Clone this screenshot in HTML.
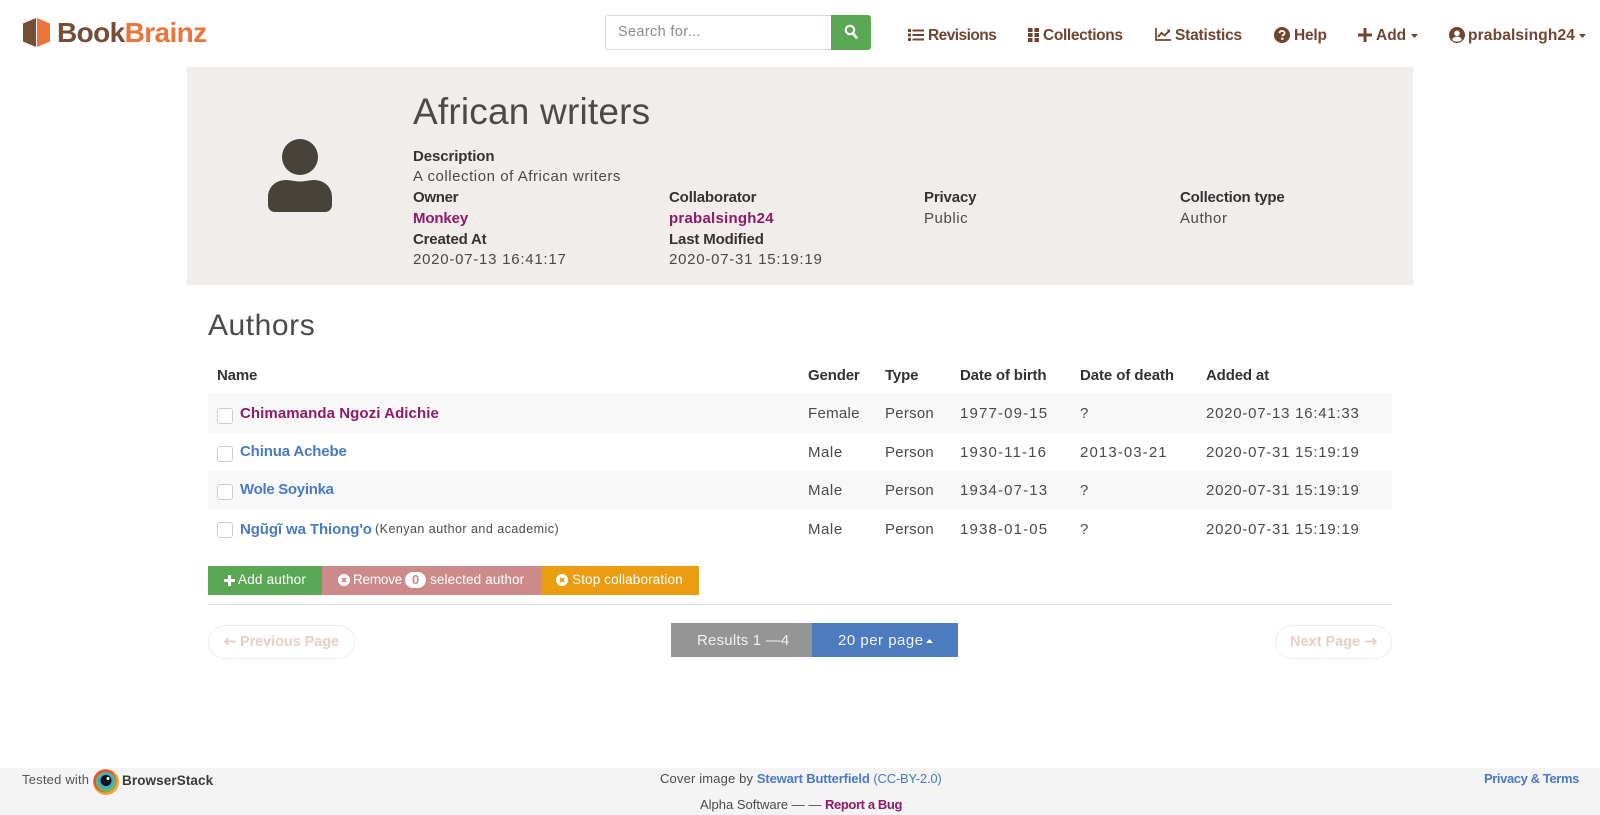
<!DOCTYPE html>
<html lang="en"><head><meta charset="utf-8"><title>BookBrainz – African writers</title>
<style>
html,body{margin:0;padding:0;background:#fff}
body{position:relative;width:1600px;height:815px;overflow:hidden;font-family:"Liberation Sans",sans-serif;font-size:15px;color:#4a4a4a}
.t{position:absolute;white-space:nowrap;line-height:20px;letter-spacing:.55px}
.b{font-weight:bold;color:#333;letter-spacing:-.15px}
.a{color:#8f1a6a;font-weight:bold}
.l{color:#4a7ac4;font-weight:bold}
.n{font-weight:bold;color:#6d4530;font-size:15.5px;letter-spacing:0}
.box{position:absolute}
svg{position:absolute;display:block}
.cb{position:absolute;left:217px;width:14px;height:14px;border:1px solid #ccc;border-radius:3px;background:#fff}
.d{letter-spacing:.75px}
.s{letter-spacing:1.15px}
.p{letter-spacing:.25px}
.w{color:#fff;font-size:13.5px}
</style></head><body>

<svg style="left:23px;top:18px" width="27" height="29" viewBox="0 0 27 29"><path d="M13 0 0 5.500v18L13 29z" fill="#754e37"/><path d="M14 0 27 5.500v18L14 29z" fill="#eb743b"/></svg>
<div class="t" style="left:57px;top:17px;font-size:28px;line-height:32px;font-weight:bold;color:#754e37;letter-spacing:-.6px">Book<span style="color:#eb743b">Brainz</span></div>

<div class="box" style="left:605px;top:15px;width:225px;height:33px;border:1px solid #e0d8d3;border-right:0;border-radius:3px 0 0 3px;background:#fff"></div>
<div class="t" style="left:618px;top:22px;color:#8c8c8c;font-size:14.5px;letter-spacing:.35px">Search for...</div>
<div class="box" style="left:831px;top:15px;width:40px;height:35px;background:#5aa854;border-radius:0 3px 3px 0"></div>
<svg style="left:844px;top:24px" width="14" height="15" viewBox="0 0 14 15"><circle cx="6" cy="6" r="4.200" fill="none" stroke="#fff" stroke-width="2.200"/><path d="M9 9.500l3.500 4" stroke="#fff" stroke-width="2.600" stroke-linecap="round"/></svg>

<svg style="left:908px;top:28px" width="16" height="14" viewBox="0 0 16 14" fill="#6d4530"><rect x="0" y="1" width="3" height="3"/><rect x="0" y="5.500" width="3" height="3"/><rect x="0" y="10" width="3" height="3"/><rect x="4.500" y="1.500" width="11.500" height="2"/><rect x="4.500" y="6" width="11.500" height="2"/><rect x="4.500" y="10.500" width="11.500" height="2"/></svg>
<div class="t n" style="left:928px;top:26px;letter-spacing:-.55px">Revisions</div>
<svg style="left:1028px;top:28px" width="11" height="14" viewBox="0 0 11 14" fill="#6d4530"><rect width="4.500" height="4" y="0"/><rect x="6.500" width="4.500" height="4" y="0"/><rect width="4.500" height="4" y="5"/><rect x="6.500" width="4.500" height="4" y="5"/><rect width="4.500" height="4" y="10"/><rect x="6.500" width="4.500" height="4" y="10"/></svg>
<div class="t n" style="left:1043px;top:26px;letter-spacing:-.35px">Collections</div>
<svg style="left:1155px;top:28px" width="16" height="13" viewBox="0 0 16 13" fill="none" stroke="#6d4530"><path d="M1 0v12h15" stroke-width="1.700"/><path d="M3 9l3.500-4 3 2.500L14 3" stroke-width="1.900"/><path d="M11.500 1.500H15V5z" fill="#6d4530" stroke="none"/></svg>
<div class="t n" style="left:1175px;top:26px;letter-spacing:-.2px">Statistics</div>
<svg style="left:1274px;top:27px" width="16" height="16" viewBox="0 0 16 16"><circle cx="8" cy="8" r="8" fill="#6d4530"/><path d="M5.400 6.200C5.600 4.600 6.700 4 8 4c1.500 0 2.600.9 2.600 2.100 0 1.800-2.300 1.800-2.300 3.200" fill="none" stroke="#fff" stroke-width="1.800"/><rect x="7.200" y="10.700" width="2.200" height="2.100" fill="#fff"/></svg>
<div class="t n" style="left:1294px;top:26px;letter-spacing:-.2px">Help</div>
<svg style="left:1358px;top:28px" width="14" height="14" viewBox="0 0 14 14" fill="#6d4530"><rect x="5.500" width="3" height="14"/><rect y="5.500" width="14" height="3"/></svg>
<div class="t n" style="left:1376px;top:26px">Add</div>
<svg style="left:1411px;top:34px" width="7" height="4" viewBox="0 0 7 4"><path d="M0 0h7L3.500 4z" fill="#6d4530"/></svg>
<svg style="left:1449px;top:27px" width="16" height="16" viewBox="0 0 16 16"><circle cx="8" cy="8" r="8" fill="#6d4530"/><circle cx="8" cy="6.300" r="2.800" fill="#fff"/><path d="M3.200 13c.4-2.300 2-3.400 4.800-3.400s4.400 1.100 4.800 3.400c-1.300 1.100-3 1.600-4.800 1.600s-3.500-.5-4.800-1.600z" fill="#fff"/></svg>
<div class="t n" style="left:1468px;top:26px;letter-spacing:.15px">prabalsingh24</div>
<svg style="left:1579px;top:34px" width="7" height="4" viewBox="0 0 7 4"><path d="M0 0h7L3.500 4z" fill="#6d4530"/></svg>

<div class="box" style="left:187px;top:67px;width:1226px;height:218px;background:#f1edea"></div>
<svg style="left:268px;top:139px" width="64" height="74" viewBox="0 0 64 74" fill="#47433a"><circle cx="32" cy="18" r="18"/><path d="M0 66V58C0 48 8 41 18 41c5 0 8 1.500 14 1.500S41 41 46 41c10 0 18 7 18 17v8c0 4-3 7-7 7H7c-4 0-7-3-7-7z"/></svg>
<div class="t" style="left:413px;top:90px;font-size:37px;line-height:44px;color:#4a4a4a;letter-spacing:.2px">African writers</div>

<div class="t b" style="left:413px;top:147px;letter-spacing:-.1px">Description</div>
<div class="t" style="left:413px;top:167px">A collection of African writers</div>
<div class="t b" style="left:413px;top:188px;letter-spacing:-.3px">Owner</div>
<div class="t a" style="left:413px;top:209px;letter-spacing:-.13px">Monkey</div>
<div class="t b" style="left:413px;top:230px;letter-spacing:-.18px">Created At</div>
<div class="t d" style="left:413px;top:250px">2020-07-13 16:41:17</div>
<div class="t b" style="left:669px;top:188px">Collaborator</div>
<div class="t a" style="left:669px;top:209px;letter-spacing:.24px">prabalsingh24</div>
<div class="t b" style="left:669px;top:230px">Last Modified</div>
<div class="t d" style="left:669px;top:250px">2020-07-31 15:19:19</div>
<div class="t b" style="left:924px;top:188px">Privacy</div>
<div class="t" style="left:924px;top:209px">Public</div>
<div class="t b" style="left:1180px;top:188px;letter-spacing:-.2px">Collection type</div>
<div class="t" style="left:1180px;top:209px">Author</div>

<div class="t" style="left:208px;top:306px;font-size:30px;line-height:40px;color:#4a4a4a">Authors</div>

<div class="t b" style="left:217px;top:366px">Name</div>
<div class="t b" style="left:808px;top:366px">Gender</div>
<div class="t b" style="left:885px;top:366px">Type</div>
<div class="t b" style="left:960px;top:366px">Date of birth</div>
<div class="t b" style="left:1080px;top:366px;letter-spacing:-.08px">Date of death</div>
<div class="t b" style="left:1206px;top:366px">Added at</div>

<div class="box" style="left:208px;top:393px;width:1184px;height:40px;background:#f8f8f8"></div>
<div class="box" style="left:208px;top:471px;width:1184px;height:38px;background:#f8f8f8"></div>

<div class="cb" style="top:408px"></div>
<div class="t a" style="left:240px;top:404px;letter-spacing:.08px">Chimamanda Ngozi Adichie</div>
<div class="t" style="left:808px;top:404px;letter-spacing:.3px">Female</div><div class="t p" style="left:885px;top:404px">Person</div><div class="t s" style="left:960px;top:404px">1977-09-15</div><div class="t" style="left:1080px;top:404px">?</div><div class="t d" style="left:1206px;top:404px">2020-07-13 16:41:33</div>

<div class="cb" style="top:446px"></div>
<div class="t l" style="left:240px;top:442px;letter-spacing:-.15px">Chinua Achebe</div>
<div class="t" style="left:808px;top:443px">Male</div><div class="t p" style="left:885px;top:443px">Person</div><div class="t s" style="left:960px;top:443px">1930-11-16</div><div class="t" style="left:1080px;top:443px;letter-spacing:1.1px">2013-03-21</div><div class="t d" style="left:1206px;top:443px">2020-07-31 15:19:19</div>

<div class="cb" style="top:484px"></div>
<div class="t l" style="left:240px;top:480px;letter-spacing:-.3px">Wole Soyinka</div>
<div class="t" style="left:808px;top:481px">Male</div><div class="t p" style="left:885px;top:481px">Person</div><div class="t s" style="left:960px;top:481px">1934-07-13</div><div class="t" style="left:1080px;top:481px">?</div><div class="t d" style="left:1206px;top:481px">2020-07-31 15:19:19</div>

<div class="cb" style="top:522px"></div>
<div class="t l" style="left:240px;top:520px;letter-spacing:-.1px">Ngũgĩ wa Thiong'o</div>
<div class="t" style="left:375px;top:519px;font-size:12.5px;letter-spacing:.47px">(Kenyan author and academic)</div>
<div class="t" style="left:808px;top:520px">Male</div><div class="t p" style="left:885px;top:520px">Person</div><div class="t s" style="left:960px;top:520px">1938-01-05</div><div class="t" style="left:1080px;top:520px">?</div><div class="t d" style="left:1206px;top:520px">2020-07-31 15:19:19</div>

<div class="box" style="left:208px;top:566px;width:114px;height:29px;background:#5aa854"></div>
<div class="box" style="left:322px;top:566px;width:219px;height:29px;background:#cc8a8a"></div>
<div class="box" style="left:541px;top:566px;width:158px;height:29px;background:#eb9d11"></div>
<svg style="left:224px;top:575px" width="11" height="11" viewBox="0 0 11 11" fill="#fff"><rect x="4" width="3" height="11"/><rect y="4" width="11" height="3"/></svg>
<div class="t w" style="left:238px;top:570px;letter-spacing:.2px">Add author</div>
<svg style="left:338px;top:574px" width="12" height="12" viewBox="0 0 12 12"><circle cx="6" cy="6" r="6" fill="#fff"/><path d="M4 4l4 4M8 4l-4 4" stroke="#cc8a8a" stroke-width="1.800"/></svg>
<div class="t w" style="left:353px;top:570px;letter-spacing:-.2px">Remove</div>
<div class="box" style="left:405px;top:572px;width:21px;height:16px;border-radius:8px;background:#fff"></div>
<div class="t" style="left:412px;top:570px;color:#cc8a8a;font-size:13px;font-weight:bold;letter-spacing:0">0</div>
<div class="t w" style="left:430px;top:570px;letter-spacing:.13px">selected author</div>
<svg style="left:556px;top:574px" width="12" height="12" viewBox="0 0 12 12"><circle cx="6" cy="6" r="6" fill="#fff"/><path d="M4 4l4 4M8 4l-4 4" stroke="#eb9d11" stroke-width="1.800"/></svg>
<div class="t w" style="left:572px;top:570px;letter-spacing:.15px">Stop collaboration</div>

<div class="box" style="left:208px;top:604px;width:1184px;height:1px;background:#e0d8d3"></div>

<div class="box" style="left:208px;top:625px;width:145px;height:32px;border:1px solid #eee;border-radius:17px;background:#fff"></div>
<svg style="left:224px;top:637px" width="12" height="9" viewBox="0 0 12 9" fill="none" stroke="#e3d0c8" stroke-width="1.800"><path d="M12 4.500H1M4.500 1 1 4.500 4.500 8"/></svg>
<div class="t" style="left:240px;top:632px;font-weight:bold;color:#e3d0c8;font-size:14.5px;letter-spacing:-.07px">Previous Page</div>
<div class="box" style="left:1275px;top:625px;width:115px;height:32px;border:1px solid #eee;border-radius:17px;background:#fff"></div>
<div class="t" style="left:1290px;top:632px;font-weight:bold;color:#e3d0c8;font-size:14.5px;letter-spacing:0">Next Page</div>
<svg style="left:1365px;top:637px" width="12" height="9" viewBox="0 0 12 9" fill="none" stroke="#e3d0c8" stroke-width="1.800"><path d="M0 4.500H11M7.500 1 11 4.500 7.500 8"/></svg>

<div class="box" style="left:671px;top:623px;width:141px;height:34px;background:#959595"></div>
<div class="box" style="left:812px;top:623px;width:146px;height:34px;background:#4c7bbf"></div>
<div class="t" style="left:697px;top:631px;color:#f2f2f2;letter-spacing:.2px">Results 1 —4</div>
<div class="t" style="left:838px;top:631px;color:#f2f2f2;letter-spacing:.5px">20 per page</div>
<svg style="left:926px;top:639px" width="7" height="4" viewBox="0 0 7 4"><path d="M0 4h7L3.500 0z" fill="#fff"/></svg>

<div class="box" style="left:0;top:768px;width:1600px;height:47px;background:#f4f4f4"></div>
<div class="t" style="left:22px;top:770px;font-size:13px;letter-spacing:.2px;color:#555">Tested with</div>
<svg style="left:92px;top:768px" width="28" height="28" viewBox="0 0 28 28"><circle cx="14" cy="14" r="13" fill="#f5a33c"/><circle cx="13" cy="13" r="11.500" fill="#e5503c"/><circle cx="14" cy="14" r="10" fill="#6dbb55"/><circle cx="14" cy="13" r="8" fill="#3fa9d6"/><circle cx="14" cy="12.500" r="5.500" fill="#111"/><circle cx="16" cy="10.500" r="1.500" fill="#fff"/></svg>
<div class="t" style="left:122px;top:771px;font-size:13.5px;font-weight:bold;color:#3a3a3a;letter-spacing:.1px">BrowserStack</div>
<div class="t" style="left:660px;top:769px;font-size:13px;letter-spacing:.15px">Cover image by <span class="l" style="letter-spacing:-.15px">Stewart Butterfield</span> <span style="color:#4a7ac4;letter-spacing:-.2px">(CC-BY-2.0)</span></div>
<div class="t" style="left:700px;top:795px;font-size:13px;letter-spacing:0">Alpha Software — — <span class="a" style="letter-spacing:-.38px">Report a Bug</span></div>
<div class="t l" style="left:1484px;top:769px;font-size:13px;letter-spacing:-.4px">Privacy &amp; Terms</div>
</body></html>
